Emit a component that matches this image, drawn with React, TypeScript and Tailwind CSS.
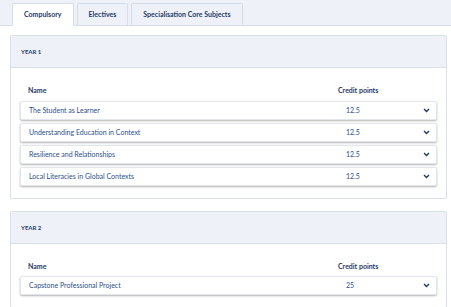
import React from 'react';

const font = { fontFamily: 'Lato, "Open Sans", sans-serif' };

const tabs = ['Compulsory', 'Electives', 'Specialisation Core Subjects'];

const years = [
    {
        title: 'YEAR 1',
        subjects: [
            { name: 'The Student as Learner', credits: '12.5' },
            { name: 'Understanding Education in Context', credits: '12.5' },
            { name: 'Resilience and Relationships', credits: '12.5' },
            { name: 'Local Literacies in Global Contexts', credits: '12.5' },
        ],
    },
    {
        title: 'YEAR 2',
        subjects: [{ name: 'Capstone Professional Project', credits: '25' }],
    },
];

const Chevron = () => (
    <svg width="7" height="5" viewBox="0 0 7 5" className="text-[#1f3a68]">
        <path d="M1 1 L3.5 3.5 L6 1" fill="none" stroke="currentColor" strokeWidth="1.4" />
    </svg>
);

const App: React.FC = () => {
    return (
        <div className="w-[451px] h-[307px] overflow-hidden bg-white" style={font}>
            {/* Tabs */}
            <div className="h-[26px] bg-[#eef2f8] border-b border-[#d5dde8] flex items-end gap-[3px] pl-[12px]">
                {tabs.map((tab, i) => (
                    <div
                        key={tab}
                        className={`px-[11px] flex items-center text-[7px] font-bold text-[#1f3a68] border border-[#d5dde8] rounded-t-[2px] ${i === 0 ? 'bg-white border-b-white -mb-px h-[23px]' : 'bg-[#eef2f8] border-b-0 h-[22px]'}`}
                    >
                        {tab}
                    </div>
                ))}
            </div>

            {/* Years */}
            <div className="pl-[10px] pr-[4px] pt-[9px] flex flex-col gap-[12px]">
                {years.map((year) => (
                    <div key={year.title} className="border border-[#d8e0ea] rounded-[2px] bg-white">
                        <div className="h-[32px] bg-[#eef2f8] border-b border-[#d8e0ea] flex items-center pl-[10px] text-[6px] font-bold text-[#1f3a68]">
                            {year.title}
                        </div>
                        <div className="px-[9px] pt-[17px] pb-[12px]">
                            <div className="flex items-center text-[7px] font-bold text-[#1f3a68] pl-[8px] pb-[5px]">
                                <span className="flex-1">Name</span>
                                <span className="w-[99px]">Credit points</span>
                            </div>
                            <div className="flex flex-col gap-[3px]">
                                {year.subjects.map((s) => (
                                    <div
                                        key={s.name}
                                        className="h-[19px] flex items-center pl-[8px] pr-[6px] bg-white rounded-[2px] shadow-[0_1px_2px_rgba(0,0,0,0.3)] border border-[#e3e7ed] text-[7px] text-[#2b4f8c]"
                                    >
                                        <span className="flex-1">{s.name}</span>
                                        <span className="w-[77px]">{s.credits}</span>
                                        <Chevron />
                                    </div>
                                ))}
                            </div>
                        </div>
                    </div>
                ))}
            </div>
        </div>
    );
};

export default App;
